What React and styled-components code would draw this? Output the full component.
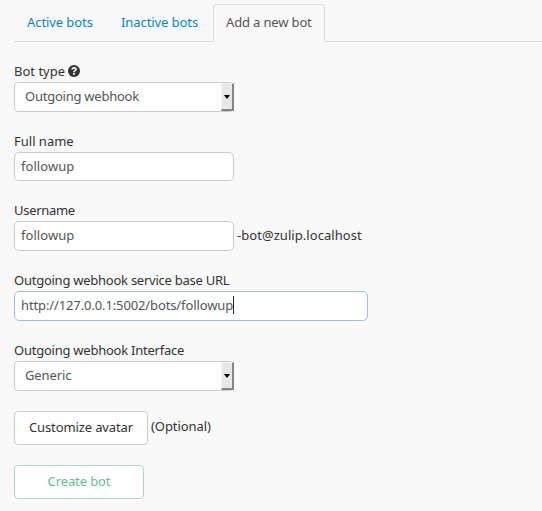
import React from "react";
import styled, { createGlobalStyle } from "styled-components";

const GlobalStyle = createGlobalStyle`
  * { box-sizing: border-box; }
  body {
    margin: 0;
    background: #f9f9f9;
    color: #333;
    font: 13px/20px "Noto Sans", "Open Sans", sans-serif;
    overflow: hidden;
  }
`;

const Page = styled.main`
  height: 511px;
  padding: 4px 0 0 14px;
`;

const Tabs = styled.nav`
  display: flex;
  height: 38px;
  border-bottom: 1px solid #ddd;
`;

const Tab = styled.a`
  height: 38px;
  width: ${(p) => p.$width}px;
  margin-right: 2px;
  padding: 7px 0 0 12px;
  border: 1px solid ${(p) => (p.$active ? "#ddd" : "transparent")};
  border-bottom-color: ${(p) => (p.$active ? "#f9f9f9" : "transparent")};
  border-radius: 4px 4px 0 0;
  color: ${(p) => (p.$active ? "#555" : "#0088cc")};
  white-space: nowrap;
`;

const Text = styled.span`
  letter-spacing: ${(p) => p.$spacing || 0}px;
  white-space: pre;
`;

const Form = styled.form`
  display: flex;
  flex-direction: column;
  align-items: flex-start;
  padding-top: 20px;
`;

const Field = styled.div`
  margin-bottom: 20px;
`;

const Label = styled.div`
  display: flex;
  align-items: center;
  height: 20px;
  padding-bottom: 2px;
`;

const Row = styled.div`
  display: flex;
  align-items: center;
  gap: 3px;
`;

const Suffix = styled(Text)`
  padding-bottom: ${(p) => p.$lift}px;
`;

const Box = styled.div`
  display: flex;
  align-items: center;
  width: ${(p) => p.$width || 220}px;
  height: ${(p) => p.$height || 30}px;
  padding: 0 0 2px 6px;
  border: 1px solid ${(p) => (p.$focused ? "#9dc1dd" : "#ccc")};
  border-radius: 5px;
  background: #fff;
  color: #555;
`;

const SelectBox = styled(Box)`
  justify-content: space-between;
  padding: 0 0 0 10px;
  border-radius: 4px;
`;

const SelectValue = styled(Text)`
  padding-bottom: 2px;
`;

const SelectButton = styled.span`
  display: flex;
  align-items: center;
  justify-content: center;
  width: 13px;
  height: 28px;
  margin-right: -1px;
  border-style: solid;
  border-width: 1px 2px 2px 1px;
  border-color: #f5f5f5 #858585 #858585 #f5f5f5;
  background: #e8e8e8;
`;

const Caret = styled.span`
  width: 1px;
  height: 18px;
  background: #222;
`;

const Button = styled.button`
  width: ${(p) => p.$width}px;
  height: 34px;
  padding: 0 0 2px;
  border: 1px solid ${(p) => (p.$primary ? "#a6dcc5" : "#ccc")};
  border-radius: 4px;
  background: #fff;
  color: ${(p) => (p.$primary ? "#5ebf95" : "#333")};
  font: inherit;
`;

const HelpIcon = styled.svg`
  margin-left: 3px;
`;

function Select({ children, spacing }) {
  return (
    <SelectBox>
      <SelectValue $spacing={spacing}>{children}</SelectValue>
      <SelectButton>
        <svg width="6" height="4" viewBox="0 0 6 4">
          <path d="M0 0H6L3.5 3.5H2.5Z" fill="#000" />
        </svg>
      </SelectButton>
    </SelectBox>
  );
}

export default function App() {
  return (
    <Page>
      <GlobalStyle />
      <Tabs>
        <Tab $width={92}><Text $spacing={-0.08}>Active bots</Text></Tab>
        <Tab $width={103}><Text $spacing={-0.08}>Inactive bots</Text></Tab>
        <Tab $width={112} $active><Text $spacing={-0.15}>Add a new bot</Text></Tab>
      </Tabs>
      <Form>
        <Field>
          <Label>
            <Text>Bot type</Text>
            <HelpIcon width="12" height="12" viewBox="0 0 12 12">
              <circle cx="6" cy="6" r="6" fill="#333" />
              <path d="M4 4.5C4.2 2.4 8 2.3 8 4.4C8 5.8 6 5.5 6 7.2" fill="none" stroke="#f9f9f9" strokeWidth="1.7" />
              <path d="M5.1 8.1H6.9V9.8H5.1Z" fill="#f9f9f9" />
            </HelpIcon>
          </Label>
          <Select spacing={-0.24}>Outgoing webhook</Select>
        </Field>
        <Field>
          <Label><Text>Full name</Text></Label>
          <Box $height={29}><Text $spacing={0.05}>followup</Text></Box>
        </Field>
        <Field>
          <Label><Text $spacing={-0.3}>Username</Text></Label>
          <Row>
            <Box><Text $spacing={0.05}>followup</Text></Box>
            <Suffix $lift={2} $spacing={0.05}>-bot@zulip.localhost</Suffix>
          </Row>
        </Field>
        <Field>
          <Label><Text $spacing={-0.25}>Outgoing webhook service base URL</Text></Label>
          <Box $width={354} $focused>
            <Text $spacing={-0.12}>http://127.0.0.1:5002/bots/followup</Text>
            <Caret />
          </Box>
        </Field>
        <Field>
          <Label><Text $spacing={-0.24}>Outgoing webhook Interface</Text></Label>
          <Select spacing={-0.1}>Generic</Select>
        </Field>
        <Field>
          <Row>
            <Button type="button" $width={134}><Text $spacing={-0.12}>Customize avatar</Text></Button>
            <Suffix $lift={4} $spacing={-0.08}>(Optional)</Suffix>
          </Row>
        </Field>
        <Button type="button" $width={130} $primary><Text $spacing={-0.1}>Create bot</Text></Button>
      </Form>
    </Page>
  );
}
